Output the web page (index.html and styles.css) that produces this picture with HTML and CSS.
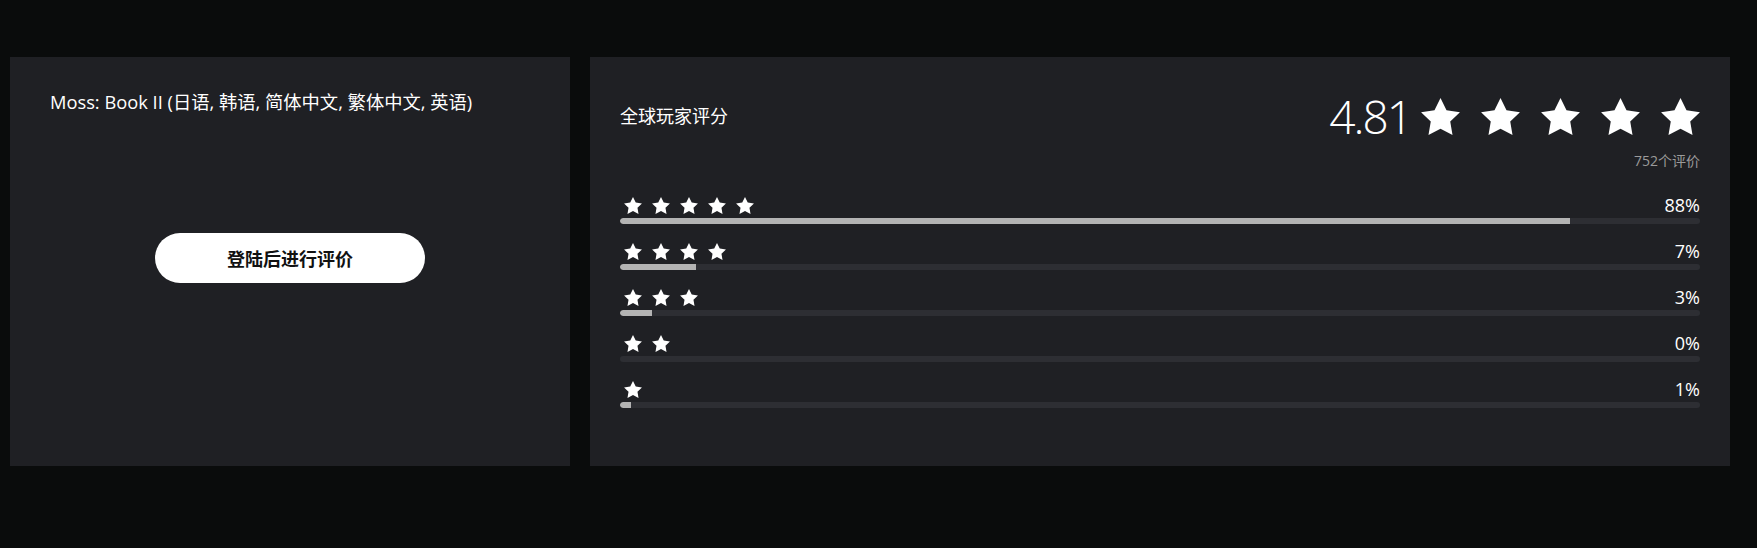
FILE: index.html
```html
<!DOCTYPE html>
<html lang="zh-CN">
<head>
    <meta charset="UTF-8">
    <meta name="viewport" content="width=device-width, initial-scale=1.0">
    <title>Moss: Book II - 评分</title>
    <link rel="stylesheet" href="styles.css">
</head>
<body>
    <svg class="sprite" xmlns="http://www.w3.org/2000/svg">
        <symbol id="star" viewBox="2 2 20 19.02">
            <path d="M12 2l3.09 6.26L22 9.27l-5 4.87 1.18 6.88L12 17.77l-6.18 3.25L7 14.14 2 9.27l6.91-1.01L12 2z"/>
        </symbol>
    </svg>

    <main class="rating-panel">
        <section class="card login-card">
            <h2 class="game-title">Moss: Book II (日语, 韩语, 简体中文, 繁体中文, 英语)</h2>
            <button type="button" class="login-btn">登陆后进行评价</button>
        </section>

        <section class="card score-card">
            <div class="score-head">
                <h3 class="score-label">全球玩家评分</h3>
                <div class="score-total">
                    <span class="score-num">4.81</span>
                    <span class="stars stars-big">
                        <svg><use href="#star"/></svg>
                        <svg><use href="#star"/></svg>
                        <svg><use href="#star"/></svg>
                        <svg><use href="#star"/></svg>
                        <svg><use href="#star"/></svg>
                    </span>
                </div>
            </div>
            <div class="score-count">752个评价</div>

            <ul class="score-rows">
                <li class="score-row">
                    <div class="row-label">
                        <span class="stars">
                            <svg><use href="#star"/></svg>
                            <svg><use href="#star"/></svg>
                            <svg><use href="#star"/></svg>
                            <svg><use href="#star"/></svg>
                            <svg><use href="#star"/></svg>
                        </span>
                        <span class="pct">88%</span>
                    </div>
                    <div class="bar"><div class="bar-fill" style="width: 88%"></div></div>
                </li>
                <li class="score-row">
                    <div class="row-label">
                        <span class="stars">
                            <svg><use href="#star"/></svg>
                            <svg><use href="#star"/></svg>
                            <svg><use href="#star"/></svg>
                            <svg><use href="#star"/></svg>
                        </span>
                        <span class="pct">7%</span>
                    </div>
                    <div class="bar"><div class="bar-fill" style="width: 7%"></div></div>
                </li>
                <li class="score-row">
                    <div class="row-label">
                        <span class="stars">
                            <svg><use href="#star"/></svg>
                            <svg><use href="#star"/></svg>
                            <svg><use href="#star"/></svg>
                        </span>
                        <span class="pct">3%</span>
                    </div>
                    <div class="bar"><div class="bar-fill" style="width: 3%"></div></div>
                </li>
                <li class="score-row">
                    <div class="row-label">
                        <span class="stars">
                            <svg><use href="#star"/></svg>
                            <svg><use href="#star"/></svg>
                        </span>
                        <span class="pct">0%</span>
                    </div>
                    <div class="bar"><div class="bar-fill" style="width: 0%"></div></div>
                </li>
                <li class="score-row">
                    <div class="row-label">
                        <span class="stars">
                            <svg><use href="#star"/></svg>
                        </span>
                        <span class="pct">1%</span>
                    </div>
                    <div class="bar"><div class="bar-fill" style="width: 1%"></div></div>
                </li>
            </ul>
        </section>
    </main>
</body>
</html>
```

FILE: styles.css
```css
* {
    margin: 0;
    padding: 0;
    box-sizing: border-box;
}

body {
    font-family: "Open Sans", "Noto Sans CJK SC", sans-serif;
    background-color: #0a0c0c;
    color: #fff;
    min-height: 100vh;
}

.sprite {
    display: none;
}

.rating-panel {
    display: grid;
    grid-template-columns: 560px 1140px;
    gap: 20px;
    padding: 57px 0 0 10px;
}

.card {
    background-color: #1f2024;
    height: 409px;
}

/* left card */
.login-card {
    padding: 33px 40px;
}

.game-title {
    font-size: 18.3px;
    font-weight: normal;
    line-height: 24px;
}

.login-btn {
    display: block;
    width: 270px;
    height: 50px;
    margin: 119px auto 0;
    border: none;
    border-radius: 25px;
    background-color: #fff;
    color: #111;
    font-family: inherit;
    font-size: 18px;
    font-weight: bold;
    cursor: pointer;
}

/* right card */
.score-card {
    padding: 30px;
}

.score-head {
    height: 58px;
    display: flex;
    justify-content: space-between;
    align-items: center;
}

.score-label {
    font-size: 18px;
    font-weight: normal;
    line-height: 24px;
}

.score-total {
    display: flex;
    align-items: center;
}

.score-num {
    font-size: 46px;
    font-weight: 300;
    line-height: 1;
    letter-spacing: -2px;
    margin-right: 10px;
}

.stars {
    display: flex;
    gap: 10px;
}

.stars svg {
    width: 18px;
    height: 17px;
    fill: #fff;
}

.stars-big {
    gap: 21px;
}

.stars-big svg {
    width: 39px;
    height: 37px;
}

.score-count {
    margin-top: 7px;
    text-align: right;
    font-size: 14px;
    line-height: 18px;
    color: #9b9b9b;
}

.score-rows {
    list-style: none;
    margin-top: 25px;
}

.score-row {
    margin-bottom: 17px;
}

.row-label {
    display: flex;
    justify-content: space-between;
    align-items: center;
    height: 20px;
    padding-left: 4px;
}

.pct {
    font-size: 18px;
    line-height: 20px;
}

.bar {
    height: 6px;
    margin-top: 3px;
    border-radius: 3px;
    background-color: #2d2e33;
    overflow: hidden;
}

.bar-fill {
    height: 100%;
    border-radius: 3px 0 0 3px;
    background-color: #b3b3b3;
}
```
